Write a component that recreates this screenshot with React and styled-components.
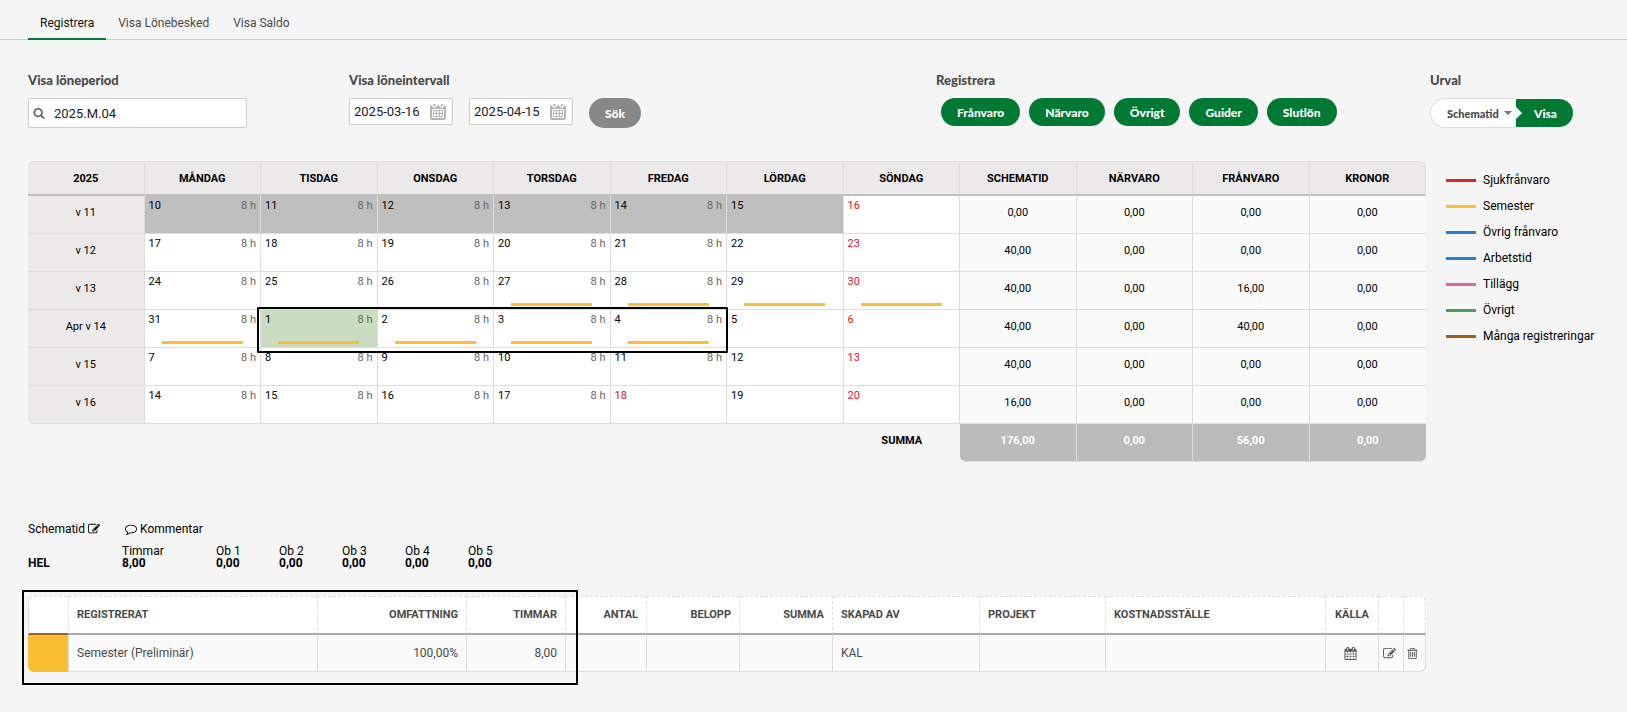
import React from "react";
import styled, { createGlobalStyle } from "styled-components";

const colors = {
  page: "#f5f5f5",
  green: "#007934",
  grayButton: "#888888",
  line: "#dddddd",
  inputLine: "#cccccc",
  head: "#ebe9ea",
  locked: "#bfbfbf",
  total: "#bbbbbb",
  holiday: "#d0162f",
  yellow: "#f9be32",
  text: "#111111",
  muted: "#4a4a4a",
};

const GlobalStyle = createGlobalStyle`
  * {
    box-sizing: border-box;
  }
  body {
    margin: 0;
    background-color: ${colors.page};
    color: ${colors.text};
    font-family: Roboto, "Liberation Sans", sans-serif;
    font-size: 12px;
  }
  button, input, select {
    font-family: inherit;
  }
  button {
    cursor: pointer;
  }
`;

/* Tabs */

const Tabs = styled.nav`
  display: flex;
  height: 40px;
  padding-left: 28px;
  border-bottom: 1px solid ${colors.inputLine};
`;

const Tab = styled.a`
  height: 40px;
  padding: 0 12px;
  line-height: 46px;
  color: ${(props) => (props.$active ? colors.text : colors.muted)};
  text-decoration: none;
  border-bottom: 2px solid
    ${(props) => (props.$active ? colors.green : "transparent")};
`;

/* Filters */

const Filters = styled.form`
  display: grid;
  grid-template-columns: 321fr 587fr 494fr 197fr;
  align-items: start;
  padding: 32px 0 0 28px;
  height: 121px;
`;

const Group = styled.div`
  min-width: 0;
`;

const groupLabel = `
  display: block;
  margin-bottom: 10px;
  line-height: 16px;
  font-family: Lato, sans-serif;
  font-size: 13px;
  font-weight: 900;
  color: ${colors.muted};
`;

const Label = styled.label`
  ${groupLabel}
`;

const Heading = styled.span`
  ${groupLabel}
`;

const Controls = styled.div`
  display: flex;
  align-items: flex-start;
  gap: ${(props) => props.$gap || 0}px;
  padding-left: ${(props) => props.$indent || 0}px;
`;

const Field = styled.div`
  display: flex;
  align-items: center;
  width: ${(props) => props.$width}px;
  height: ${(props) => props.$height}px;
  padding: 0 6px 0 4px;
  background-color: #fff;
  border: 1px solid ${colors.inputLine};
  border-radius: 2px;
`;

const TextInput = styled.input`
  flex: 1;
  min-width: 0;
  padding: 0;
  border: 0;
  outline: none;
  background: none;
  font-size: 13px;
  color: #222;
`;

const SearchIcon = styled.span`
  display: flex;
  width: 21px;
  color: #666;
`;

const Pill = styled.button`
  height: ${(props) => (props.$gray ? 30 : 28)}px;
  padding: 0 16px;
  border: 0;
  border-radius: 15px;
  background-color: ${(props) =>
    props.$gray ? colors.grayButton : colors.green};
  color: #fff;
  font-family: Lato, sans-serif;
  font-size: 12px;
  font-weight: 900;
`;

const SelectWrapper = styled.div`
  display: flex;
  align-items: center;
  width: 86px;
  height: 30px;
  padding-right: 4px;
  background-color: #fff;
  border: 1px solid ${colors.line};
  border-right: 0;
  border-radius: 15px 0 0 15px;
`;

const Select = styled.select`
  appearance: none;
  flex: 1;
  min-width: 0;
  height: 28px;
  padding: 0 0 0 16px;
  border: 0;
  outline: none;
  background: none;
  font-family: Lato, sans-serif;
  font-size: 11px;
  font-weight: 900;
  color: ${colors.muted};
`;

const Caret = styled.span`
  border: 4px solid transparent;
  border-top-color: #777;
  border-bottom: 0;
`;

const ShowButton = styled(Pill)`
  position: relative;
  align-self: center;
  padding: 0 16px 0 18px;
  border-radius: 0 14px 14px 0;

  &::before {
    content: "";
    position: absolute;
    left: 0;
    top: 8px;
    border: 6px solid transparent;
    border-left-color: #fff;
    border-right: 0;
  }
`;

/* Calendar */

const Content = styled.main`
  display: grid;
  grid-template-columns: minmax(0, 1fr) 201px;
  padding: 0 0 40px 28px;
`;

const Calendar = styled.table`
  width: 100%;
  table-layout: fixed;
  border-spacing: 0;
  font-size: 11px;
  color: #000;

  th,
  td {
    padding: 0;
  }
`;

const HeadCell = styled.th`
  height: 35px;
  background-color: ${colors.head};
  border-top: 1px solid ${colors.line};
  border-right: 1px solid ${colors.line};
  border-bottom: 2px solid ${colors.locked};
  font-weight: 700;

  &:first-child {
    border-top-left-radius: 6px;
  }
  &:last-child {
    border-top-right-radius: 6px;
  }
`;

const Cell = styled.td`
  height: 38px;
  background-color: #fafafa;
  border-right: 1px solid ${colors.line};
  border-bottom: 1px solid ${colors.line};
  text-align: center;
  line-height: 34px;
  vertical-align: top;

  &:last-child {
    border-right-color: #fafafa;
  }
`;

const WeekCell = styled.th`
  height: 38px;
  background-color: ${colors.head};
  border-right: 1px solid ${colors.line};
  border-bottom: 1px solid ${colors.line};
  font-weight: 400;
  line-height: 34px;
  vertical-align: top;

  tr:last-child > & {
    border-bottom-left-radius: 6px;
  }
`;

const dayColors = {
  locked: colors.locked,
  selected: "#cbddc1",
};

const DayCell = styled.td`
  position: relative;
  height: 38px;
  background-color: ${(props) => dayColors[props.$state] || "#fff"};
  border-right: 1px solid ${colors.line};
  border-bottom: 1px solid ${colors.line};
  vertical-align: top;
`;

const DayHead = styled.div`
  display: flex;
  justify-content: space-between;
  padding: 0 4px;
  line-height: 20px;
  color: ${(props) => (props.$holiday ? colors.holiday : "#000")};
`;

const Hours = styled.span`
  color: #666;
`;

const Bar = styled.div`
  width: 70%;
  height: 3px;
  margin: 11px auto 0;
  background-color: ${colors.yellow};
`;

const DaysFrame = styled.div`
  position: absolute;
  z-index: 1;
  top: -3px;
  left: -4px;
  width: calc(400% + 9px);
  height: 46px;
  border: 2px solid #000;
  border-radius: 1px;
  pointer-events: none;
`;

const SumLabel = styled.th`
  height: 38px;
  line-height: 34px;
  vertical-align: top;
`;

const SumCell = styled.td`
  height: 38px;
  background-color: ${colors.total};
  border-right: 1px solid ${colors.line};
  border-bottom: 1px solid ${colors.line};
  color: #fff;
  font-weight: 700;
  line-height: 34px;
  text-align: center;
  vertical-align: top;

  &:last-child {
    border-right: 0;
    border-bottom-right-radius: 6px;
  }
  &:nth-child(3) {
    border-bottom-left-radius: 6px;
  }
`;

const Legend = styled.ul`
  margin: 0;
  padding: 6px 0 0 20px;
  list-style: none;
  color: #000;
`;

const LegendItem = styled.li`
  display: flex;
  align-items: center;
  gap: 7px;
  line-height: 26px;
  white-space: nowrap;

  &::before {
    content: "";
    width: 30px;
    height: 3px;
    background-color: ${(props) => props.$color};
  }
`;

/* Details for the selected day */

const Details = styled.section`
  padding-top: 60px;
  color: #000;
`;

const Actions = styled.div`
  display: flex;
  gap: 25px;
`;

const LinkButton = styled.button`
  display: flex;
  align-items: center;
  gap: 3px;
  padding: 0;
  border: 0;
  background: none;
  font-size: 12px;
  line-height: 14px;
  color: #000;
`;

const Schedule = styled.table`
  margin-top: 9px;
  table-layout: fixed;
  width: 503px;
  border-spacing: 0;
  line-height: 12px;

  th,
  td {
    padding: 0;
    text-align: left;
    font-weight: 400;
  }
  tbody th,
  tbody td {
    font-weight: 700;
  }
`;

const Col = styled.col`
  width: ${(props) => props.$width}px;
`;

const Registered = styled.div`
  position: relative;
  margin-top: 27px;
`;

const DataTable = styled.table`
  width: 100%;
  table-layout: fixed;
  border-spacing: 0;
  color: ${colors.muted};

  th,
  td {
    padding: 0 8px;
    text-align: left;
  }
  th {
    height: 39px;
    padding-bottom: 2px;
    background-color: #fff;
    border-top: 1px dashed ${colors.line};
    border-right: 1px dashed ${colors.line};
    border-bottom: 2px solid #aaaaaa;
    font-size: 11px;
    font-weight: 700;
  }
  td {
    height: 37px;
    background-color: #fafafa;
    border-right: 1px solid ${colors.line};
    border-bottom: 1px solid ${colors.line};
  }
  th:first-child {
    border-left: 1px solid ${colors.line};
    border-top-left-radius: 6px;
    border-bottom-color: #9c6420;
  }
  th:last-child {
    border-top-right-radius: 6px;
  }
  td:first-child {
    background-color: ${colors.yellow};
    border-bottom-color: ${colors.yellow};
    border-bottom-left-radius: 6px;
  }
  td:last-child {
    border-bottom-right-radius: 6px;
  }
  && .right {
    text-align: right;
  }
  && .center {
    padding-left: 0;
    padding-right: 0;
    text-align: center;
  }
  && td.center {
    padding-right: 4px;
  }
`;

const IconButton = styled.button`
  display: block;
  margin: 0 auto;
  padding: 0;
  border: 0;
  background: none;
  line-height: 0;
  color: #555;
`;

const RowFrame = styled.div`
  position: absolute;
  top: -6px;
  left: -6px;
  width: calc(40% - 3px);
  height: 95px;
  border: 2px solid #000;
  border-radius: 1px;
  pointer-events: none;
`;

/* Icons */

const iconPaths = {
  search:
    "M1216 832q0-185-131.5-316.5t-316.5-131.5-316.5 131.5-131.5 316.5 131.5 316.5 316.5 131.5 316.5-131.5 131.5-316.5zm512 832q0 52-38 90t-90 38q-54 0-90-38l-343-342q-179 124-399 124-143 0-273.5-55.5t-225-150-150-225-55.5-273.5 55.5-273.5 150-225 225-150 273.5-55.5 273.5 55.5 225 150 150 225 55.5 273.5q0 220-124 399l343 343q37 37 37 90z",
  edit: "M888 1184l116-116-152-152-116 116v56h96v96h56zm440-720q-16-16-33 1l-350 350q-17 17-1 33t33-1l350-350q17-17 1-33zm80 594v190q0 119-84.5 203.5t-203.5 84.5h-832q-119 0-203.5-84.5t-84.5-203.5v-832q0-119 84.5-203.5t203.5-84.5h832q63 0 117 25 15 7 18 23 3 17-9 29l-49 49q-14 14-32 8-23-6-45-6h-832q-66 0-113 47t-47 113v832q0 66 47 113t113 47h832q66 0 113-47t47-113v-126q0-13 9-22l64-64q15-15 35-7t20 29zm-96-738l288 288-672 672h-288v-288zm444 132l-92 92-288-288 92-92q28-28 68-28t68 28l152 152q28 28 28 68t-28 68z",
  comment:
    "M896 384q-204 0-381.5 69.5t-282 187.5-104.5 255q0 112 71.5 213.5t201.5 175.5l87 50-27 96q-24 91-70 172 152-63 275-171l43-38 57 6q69 8 130 8 204 0 381.5-69.5t282-187.5 104.5-255-104.5-255-282-187.5-381.5-69.5zm896 512q0 174-120 321.5t-326 233-450 85.5q-70 0-145-8-198 175-460 242-49 14-114 22h-5q-15 0-27-10.5t-16-27.5v-1q-3-4-.5-12t2-10 4.5-9.5l6-9 7-8.5 8-9q7-8 31-34.5t34.5-38 31-39.5 32.5-51 27-59 26-76q-157-89-247.5-220t-90.5-281q0-174 120-321.5t326-233 450-85.5 450 85.5 326 233 120 321.5z",
  calendar:
    "M192 1664h288v-288h-288v288zm352 0h320v-288h-320v288zm-352-352h288v-320h-288v320zm352 0h320v-320h-320v320zm-352-384h288v-288h-288v288zm736 736h320v-288h-320v288zm-384-736h320v-288h-320v288zm768 736h288v-288h-288v288zm-384-352h320v-320h-320v320zm-352-864v-288q0-13-9.5-22.5t-22.5-9.5h-64q-13 0-22.5 9.5t-9.5 22.5v288q0 13 9.5 22.5t22.5 9.5h64q13 0 22.5-9.5t9.5-22.5zm736 864h288v-320h-288v320zm-384-384h320v-288h-320v288zm384 0h288v-288h-288v288zm32-480v-288q0-13-9.5-22.5t-22.5-9.5h-64q-13 0-22.5 9.5t-9.5 22.5v288q0 13 9.5 22.5t22.5 9.5h64q13 0 22.5-9.5t9.5-22.5zm384-64v1280q0 52-38 90t-90 38h-1408q-52 0-90-38t-38-90v-1280q0-52 38-90t90-38h128v-96q0-66 47-113t113-47h64q66 0 113 47t47 113v96h384v-96q0-66 47-113t113-47h64q66 0 113 47t47 113v96h128q52 0 90 38t38 90z",
  trash:
    "M704 736v576q0 14-9 23t-23 9h-64q-14 0-23-9t-9-23v-576q0-14 9-23t23-9h64q14 0 23 9t9 23zm256 0v576q0 14-9 23t-23 9h-64q-14 0-23-9t-9-23v-576q0-14 9-23t23-9h64q14 0 23 9t9 23zm256 0v576q0 14-9 23t-23 9h-64q-14 0-23-9t-9-23v-576q0-14 9-23t23-9h64q14 0 23 9t9 23zm128 724v-948h-896v948q0 22 7 40.5t14.5 27 10.5 8.5h832q3 0 10.5-8.5t14.5-27 7-40.5zm-672-1076h448l-48-117q-7-9-17-11h-317q-10 2-17 11zm928 32v64q0 14-9 23t-23 9h-96v948q0 83-47 143.5t-113 60.5h-832q-66 0-113-58.5t-47-141.5v-952h-96q-14 0-23-9t-9-23v-64q0-14 9-23t23-9h309l70-167q15-37 54-63t79-26h320q40 0 79 26t54 63l70 167h309q14 0 23 9t9 23z",
};

const Icon = ({ name, size = 12 }) => (
  <svg
    width={size}
    height={size}
    viewBox="0 0 1792 1792"
    fill="currentColor"
    aria-hidden="true"
  >
    <path d={iconPaths[name]} />
  </svg>
);

const DatePickerIcon = () => (
  <svg width="16" height="16" viewBox="0 0 16 16" aria-hidden="true">
    <rect x="0" y="1" width="16" height="15" rx="2" fill="#b5b5b5" />
    <path d="M2 5h12v9H2z" fill="#fff" />
    <path d="M3 0h2v3H3zM11 0h2v3h-2z" fill="#b5b5b5" />
    <path d="M2 1h1v2h3V1h4v2h3V1h1" fill="none" stroke="#fff" />
    <path
      d="M3.500 6.500h9v6h-9zM3.500 9.500h9M6.500 6.500v6M9.500 6.500v6"
      fill="none"
      stroke="#b5b5b5"
    />
  </svg>
);

/* Data */

const headings = [
  "2025",
  "MÅNDAG",
  "TISDAG",
  "ONSDAG",
  "TORSDAG",
  "FREDAG",
  "LÖRDAG",
  "SÖNDAG",
  "SCHEMATID",
  "NÄRVARO",
  "FRÅNVARO",
  "KRONOR",
];

const weeks = [
  {
    name: "v 11",
    days: [10, 11, 12, 13, 14, 15, 16],
    locked: [10, 11, 12, 13, 14, 15],
    sums: ["0,00", "0,00", "0,00", "0,00"],
  },
  {
    name: "v 12",
    days: [17, 18, 19, 20, 21, 22, 23],
    sums: ["40,00", "0,00", "0,00", "0,00"],
  },
  {
    name: "v 13",
    days: [24, 25, 26, 27, 28, 29, 30],
    vacation: [27, 28, 29, 30],
    sums: ["40,00", "0,00", "16,00", "0,00"],
  },
  {
    name: "Apr v 14",
    days: [31, 1, 2, 3, 4, 5, 6],
    vacation: [31, 1, 2, 3, 4],
    selected: 1,
    sums: ["40,00", "0,00", "40,00", "0,00"],
  },
  {
    name: "v 15",
    days: [7, 8, 9, 10, 11, 12, 13],
    sums: ["40,00", "0,00", "0,00", "0,00"],
  },
  {
    name: "v 16",
    days: [14, 15, 16, 17, 18, 19, 20],
    holidays: [18],
    sums: ["16,00", "0,00", "0,00", "0,00"],
  },
];

const totals = ["176,00", "0,00", "56,00", "0,00"];

const legend = [
  ["Sjukfrånvaro", "#dc2626"],
  ["Semester", "#fbc02d"],
  ["Övrig frånvaro", "#2481d2"],
  ["Arbetstid", "#2481d2"],
  ["Tillägg", "#de66a5"],
  ["Övrigt", "#45a25a"],
  ["Många registreringar", "#9c5f14"],
];

const registerActions = ["Frånvaro", "Närvaro", "Övrigt", "Guider", "Slutlön"];

const schedule = [
  ["Timmar", "8,00", 94],
  ["Ob 1", "0,00", 63],
  ["Ob 2", "0,00", 63],
  ["Ob 3", "0,00", 63],
  ["Ob 4", "0,00", 63],
  ["Ob 5", "0,00", 63],
];

const columns = [
  { width: 41 },
  { width: 249, title: "REGISTRERAT", value: "Semester (Preliminär)" },
  { width: 149, title: "OMFATTNING", value: "100,00%", align: "right" },
  { width: 99, title: "TIMMAR", value: "8,00", align: "right" },
  { width: 81, title: "ANTAL", align: "right" },
  { width: 93, title: "BELOPP", align: "right" },
  { width: 93, title: "SUMMA", align: "right" },
  { width: 147, title: "SKAPAD AV", value: "KAL" },
  { width: 126, title: "PROJEKT" },
  { width: 220, title: "KOSTNADSSTÄLLE" },
  { width: 53, title: "KÄLLA", icon: "calendar", label: "Källa", align: "center" },
  { width: 25, icon: "edit", label: "Redigera", align: "center" },
  { width: 22, icon: "trash", label: "Ta bort", align: "center" },
];

const Day = ({ day, index, week }) => {
  const weekend = index > 4;
  const holiday = index === 6 || (week.holidays || []).includes(day);
  const locked = (week.locked || []).includes(day);
  const selected = week.selected === day;

  return (
    <DayCell $state={locked ? "locked" : selected ? "selected" : "open"}>
      <DayHead $holiday={holiday}>
        <span>{day}</span>
        {!weekend && !holiday && <Hours>8 h</Hours>}
      </DayHead>
      {(week.vacation || []).includes(day) && <Bar />}
      {selected && <DaysFrame />}
    </DayCell>
  );
};

const FilterBar = () => (
  <Filters onSubmit={(e) => e.preventDefault()}>
    <Group>
      <Label htmlFor="period">Visa löneperiod</Label>
      <Field $width={219} $height={30}>
        <SearchIcon>
          <Icon name="search" />
        </SearchIcon>
        <TextInput id="period" defaultValue="2025.M.04" />
      </Field>
    </Group>
    <Group>
      <Label htmlFor="from">Visa löneintervall</Label>
      <Controls $gap={16}>
        <Field $width={104} $height={27}>
          <TextInput id="from" defaultValue="2025-03-16" />
          <DatePickerIcon />
        </Field>
        <Field $width={104} $height={27}>
          <TextInput
            id="to"
            aria-label="Visa löneintervall till"
            defaultValue="2025-04-15"
          />
          <DatePickerIcon />
        </Field>
        <Pill type="submit" $gray>
          Sök
        </Pill>
      </Controls>
    </Group>
    <Group>
      <Heading>Registrera</Heading>
      <Controls $gap={9} $indent={5}>
        {registerActions.map((action) => (
          <Pill type="button" key={action}>
            {action}
          </Pill>
        ))}
      </Controls>
    </Group>
    <Group>
      <Label htmlFor="selection">Urval</Label>
      <Controls>
        <SelectWrapper>
          <Select id="selection">
            <option>Schematid</option>
          </Select>
          <Caret />
        </SelectWrapper>
        <ShowButton type="button">Visa</ShowButton>
      </Controls>
    </Group>
  </Filters>
);

const App = () => {
  return (
    <>
      <GlobalStyle />
      <Tabs>
        <Tab href="#registrera" $active>
          Registrera
        </Tab>
        <Tab href="#lonebesked">Visa Lönebesked</Tab>
        <Tab href="#saldo">Visa Saldo</Tab>
      </Tabs>
      <FilterBar />
      <Content>
        <Calendar>
          <thead>
            <tr>
              {headings.map((heading) => (
                <HeadCell key={heading}>{heading}</HeadCell>
              ))}
            </tr>
          </thead>
          <tbody>
            {weeks.map((week) => (
              <tr key={week.name}>
                <WeekCell scope="row">{week.name}</WeekCell>
                {week.days.map((day, index) => (
                  <Day key={day} day={day} index={index} week={week} />
                ))}
                {week.sums.map((sum, index) => (
                  <Cell key={index}>{sum}</Cell>
                ))}
              </tr>
            ))}
          </tbody>
          <tfoot>
            <tr>
              <td colSpan={7} />
              <SumLabel scope="row">SUMMA</SumLabel>
              {totals.map((total, index) => (
                <SumCell key={index}>{total}</SumCell>
              ))}
            </tr>
          </tfoot>
        </Calendar>
        <Legend>
          {legend.map(([name, color]) => (
            <LegendItem key={name} $color={color}>
              {name}
            </LegendItem>
          ))}
        </Legend>
        <Details>
          <Actions>
            <LinkButton type="button">
              Schematid
              <Icon name="edit" />
            </LinkButton>
            <LinkButton type="button">
              <Icon name="comment" />
              Kommentar
            </LinkButton>
          </Actions>
          <Schedule>
            <colgroup>
              <Col $width={94} />
              {schedule.map(([name, , width]) => (
                <Col key={name} $width={width} />
              ))}
            </colgroup>
            <thead>
              <tr>
                <td />
                {schedule.map(([name]) => (
                  <th key={name}>{name}</th>
                ))}
              </tr>
            </thead>
            <tbody>
              <tr>
                <th scope="row">HEL</th>
                {schedule.map(([name, value]) => (
                  <td key={name}>{value}</td>
                ))}
              </tr>
            </tbody>
          </Schedule>
          <Registered>
            <DataTable>
              <colgroup>
                {columns.map((column, index) => (
                  <Col key={index} $width={column.width} />
                ))}
              </colgroup>
              <thead>
                <tr>
                  {columns.map((column, index) => (
                    <th key={index} className={column.align}>
                      {column.title}
                    </th>
                  ))}
                </tr>
              </thead>
              <tbody>
                <tr>
                  {columns.map((column, index) => (
                    <td key={index} className={column.align}>
                      {column.icon ? (
                        <IconButton type="button" aria-label={column.label}>
                          <Icon name={column.icon} size={13} />
                        </IconButton>
                      ) : (
                        column.value
                      )}
                    </td>
                  ))}
                </tr>
              </tbody>
            </DataTable>
            <RowFrame />
          </Registered>
        </Details>
      </Content>
    </>
  );
};

export default App;
